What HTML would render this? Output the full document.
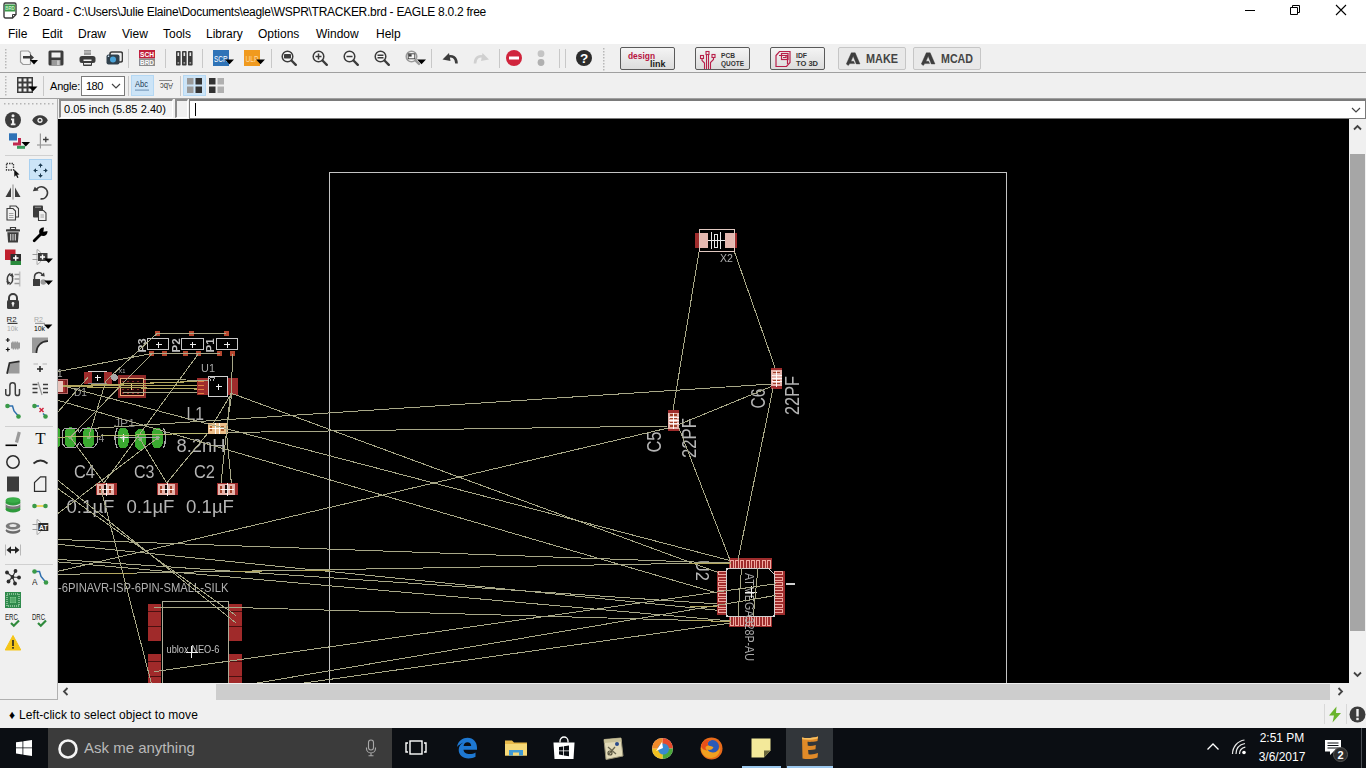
<!DOCTYPE html>
<html><head><meta charset="utf-8"><title>2 Board - EAGLE</title>
<style>
*{box-sizing:border-box;margin:0;padding:0}
html,body{width:1366px;height:768px;overflow:hidden;background:#f0f0f0;font-family:"Liberation Sans",sans-serif;font-size:12px;color:#000}
.abs{position:absolute}
#title{position:absolute;left:0;top:0;width:1366px;height:23px;background:#fff}
#title .t{position:absolute;left:23px;top:5px;font-size:12px;letter-spacing:-.28px;white-space:nowrap;color:#000}
#menu{position:absolute;left:0;top:23px;width:1366px;height:21px;background:#fff}
#menu span{position:absolute;top:4px;font-size:12px;white-space:nowrap}
#tb1{position:absolute;left:0;top:44px;width:1366px;height:29px;background:#f0f0f0;border-bottom:1px solid #a0a0a0}
#tb1>*{margin-top:1px}
#tb2{position:absolute;left:0;top:73px;width:1366px;height:26px;background:#f0f0f0;border-bottom:1px solid #a0a0a0}
#cmd{position:absolute;left:0;top:99px;width:1366px;height:20px;background:#f0f0f0}
#left{position:absolute;left:0;top:99px;width:58px;height:601px;background:#f0f0f0;border-right:1px solid #b0b0b0;border-bottom:1px solid #b0b0b0}
#canvas{position:absolute;left:58px;top:119px;width:1291px;height:564px;background:#000;overflow:hidden}
#vscroll{position:absolute;left:1349px;top:119px;width:17px;height:564px;background:#f0f0f0}
#hscroll{position:absolute;left:58px;top:683px;width:1291px;height:17px;background:#f0f0f0}
#status{position:absolute;left:0;top:700px;width:1366px;height:28px;background:#f0f0f0}
#task{position:absolute;left:0;top:728px;width:1366px;height:40px;background:#0b0e13}
.sep{position:absolute;width:1px;background:#c8c8c8}
</style></head><body>
<div id="title"><span class="t">2 Board - C:\Users\Julie Elaine\Documents\eagle\WSPR\TRACKER.brd - EAGLE 8.0.2 free</span><svg class="abs" style="left:3px;top:2px" width="14" height="17" viewBox="0 0 14 17"><path d="M2.500 1h9a1.500 1.500 0 0 1 1.500 1.500V12.500L9.500 16H2.500A1.500 1.500 0 0 1 1 14.500V2.500A1.500 1.500 0 0 1 2.500 1z" fill="#fff" stroke="#3a3a3a" stroke-width="1.400"/><path d="M9.500 16v-3.500H13" fill="none" stroke="#3a3a3a" stroke-width="1"/><rect x="1.700" y="2.500" width="10.600" height="7" fill="#3a9a48"/><text x="7" y="8.300" font-family="Liberation Sans,sans-serif" font-weight="700" font-size="5.500" fill="#c8f0c8" text-anchor="middle" textLength="9.500" lengthAdjust="spacingAndGlyphs">BRD</text></svg>
<svg class="abs" style="left:1244px;top:5px" width="12" height="12"><path d="M1 5.500h10" stroke="#000" stroke-width="1"/></svg>
<svg class="abs" style="left:1289px;top:4px" width="12" height="12"><path d="M1.500 3.500h7v7h-7z" fill="none" stroke="#000" stroke-width="1"/><path d="M3.500 3.500v-2h7v7h-2" fill="none" stroke="#000" stroke-width="1"/></svg>
<svg class="abs" style="left:1335px;top:4px" width="12" height="12"><path d="M1 1l10 10M11 1L1 11" stroke="#000" stroke-width="1.100"/></svg>
</div>
<div id="menu">
<span style="left:8px">File</span><span style="left:42px">Edit</span><span style="left:78px">Draw</span><span style="left:122px">View</span><span style="left:163px">Tools</span><span style="left:206px">Library</span><span style="left:258px">Options</span><span style="left:316px">Window</span><span style="left:376px">Help</span>
</div>
<div id="tb1">
<!-- handle dots -->
<svg class="abs" style="left:4px;top:3px" width="4" height="22"><g fill="#b8b8b8"><rect x="1" y="1" width="1.5" height="1.5"/><rect x="1" y="4" width="1.5" height="1.5"/><rect x="1" y="7" width="1.5" height="1.5"/><rect x="1" y="10" width="1.5" height="1.5"/><rect x="1" y="13" width="1.5" height="1.5"/><rect x="1" y="16" width="1.5" height="1.5"/><rect x="1" y="19" width="1.5" height="1.5"/></g></svg>
<!-- open -->
<svg class="abs" style="left:19px;top:5px" width="20" height="16" viewBox="0 0 20 16"><path d="M2.5 1h7l2 2v10.5a1 1 0 0 1-1 1H4l-2.500-2.500V2a1 1 0 0 1 1-1z" fill="#f4f4f4" stroke="#9a9a9a" stroke-width="1.2"/><path d="M4 6h7V4l4 3.500-4 3.500V8.500H4z" fill="#3c3c3c"/><path d="M11 10h8l-4 4.500z" fill="#000"/></svg>
<!-- save -->
<svg class="abs" style="left:48px;top:5px" width="16" height="16" viewBox="0 0 16 16"><path d="M2 0.500h12a1.500 1.500 0 0 1 1.500 1.500v12a1.500 1.500 0 0 1-1.500 1.500H2A1.500 1.500 0 0 1 .5 14V2A1.500 1.500 0 0 1 2 .5z" fill="#3c3c3c"/><rect x="3.500" y="2.500" width="9" height="5" fill="#f0f0f0"/><rect x="3.500" y="10" width="9" height="5.500" fill="#9a9a9a"/><rect x="9" y="10.500" width="2.500" height="4.500" fill="#c8c8c8"/></svg>
<!-- print -->
<svg class="abs" style="left:79px;top:5px" width="17" height="16" viewBox="0 0 17 16"><rect x="5" y="0" width="7" height="5" fill="#9a9a9a"/><rect x="5" y="1.500" width="7" height="1" fill="#d0d0d0"/><rect x="0.500" y="6" width="16" height="7" rx="2.500" fill="#3c3c3c"/><rect x="4" y="10" width="9" height="6" rx="1" fill="#3c3c3c"/><rect x="4.500" y="9.500" width="8" height="1.500" fill="#f0f0f0"/><rect x="5" y="13" width="7" height="1.500" fill="#f0f0f0"/></svg>
<!-- cam -->
<svg class="abs" style="left:106px;top:5px" width="17" height="16" viewBox="0 0 17 16"><rect x="4" y="2" width="12.500" height="10" rx="2" fill="none" stroke="#3c3c3c" stroke-width="1.600"/><rect x="0.500" y="4.500" width="13" height="10" rx="2" fill="#30404c"/><circle cx="7" cy="9.500" r="3" fill="#4aa3d8"/><circle cx="2.500" cy="6.300" r=".8" fill="#dfefff"/></svg>
<div class="sep" style="left:128px;top:4px;height:19px"></div>
<!-- SCH BRD -->
<svg class="abs" style="left:139px;top:5px" width="16" height="16" viewBox="0 0 16 16"><rect width="16" height="8.500" fill="#c0203a"/><rect y="8.500" width="16" height="7.500" fill="#8c8c8c"/><text x="8" y="7.200" font-family="Liberation Sans,sans-serif" font-weight="700" font-size="7.400" fill="#fff" text-anchor="middle" textLength="14" lengthAdjust="spacingAndGlyphs">SCH</text><text x="8" y="15" font-family="Liberation Sans,sans-serif" font-weight="700" font-size="7.400" fill="#fff" text-anchor="middle" textLength="14" lengthAdjust="spacingAndGlyphs">BRD</text></svg>
<div class="sep" style="left:165px;top:4px;height:19px"></div>
<!-- library -->
<svg class="abs" style="left:176px;top:6px" width="17" height="15" viewBox="0 0 17 15"><g fill="#3c3c3c"><rect x="0" y="0" width="4.600" height="14.500" rx=".8"/><rect x="6" y="0" width="4.600" height="14.500" rx=".8"/><rect x="12" y="0" width="4.600" height="14.500" rx=".8"/></g><g fill="#e8e8e8"><rect x="1.500" y="1.500" width="1.600" height="3.500"/><rect x="7.500" y="1.500" width="1.600" height="3.500"/><rect x="13.500" y="1.500" width="1.600" height="3.500"/></g><g fill="#9a9a9a"><rect x="1.500" y="11" width="1.600" height="1.800"/><rect x="7.500" y="11" width="1.600" height="1.800"/><rect x="13.500" y="11" width="1.600" height="1.800"/></g></svg>
<div class="sep" style="left:202px;top:4px;height:19px"></div>
<!-- SCR -->
<svg class="abs" style="left:213px;top:5px" width="22" height="16" viewBox="0 0 22 16"><rect width="16" height="16" fill="#2f73b7"/><text x="1" y="11.500" font-family="Liberation Sans,sans-serif" font-size="8.500" fill="#fff" textLength="13.500" lengthAdjust="spacingAndGlyphs">SCR</text><path d="M12 9.500h9l-4.500 4.700z" fill="#000"/></svg>
<!-- ULP -->
<svg class="abs" style="left:244px;top:5px" width="22" height="16" viewBox="0 0 22 16"><rect width="16" height="16" fill="#f09a1e"/><text x="1.500" y="11.500" font-family="Liberation Sans,sans-serif" font-size="8.500" fill="#ffd9a0" textLength="13" lengthAdjust="spacingAndGlyphs">ULP</text><path d="M12 9.500h9l-4.500 4.700z" fill="#000"/></svg>
<div class="sep" style="left:271px;top:4px;height:19px"></div>
<svg class="abs" style="left:281px;top:5px" width="17" height="17" viewBox="0 0 17 17"><circle cx="6.500" cy="6.500" r="5.300" fill="#f6f6f6" stroke="#3c3c3c" stroke-width="1.500"/><path d="M10.500 10.500l4.300 4.300" stroke="#3c3c3c" stroke-width="2.400" stroke-linecap="round"/><rect x="3" y="4" width="7" height="4.500" rx=".8" fill="#3c3c3c"/></svg>
<svg class="abs" style="left:312px;top:5px" width="17" height="17" viewBox="0 0 17 17"><circle cx="6.500" cy="6.500" r="5.300" fill="#f6f6f6" stroke="#3c3c3c" stroke-width="1.500"/><path d="M10.500 10.500l4.300 4.300" stroke="#3c3c3c" stroke-width="2.400" stroke-linecap="round"/><path d="M3.500 6.500h6M6.500 3.500v6" stroke="#3c3c3c" stroke-width="1.500"/></svg>
<svg class="abs" style="left:343px;top:5px" width="17" height="17" viewBox="0 0 17 17"><circle cx="6.500" cy="6.500" r="5.300" fill="#f6f6f6" stroke="#3c3c3c" stroke-width="1.500"/><path d="M10.500 10.500l4.300 4.300" stroke="#3c3c3c" stroke-width="2.400" stroke-linecap="round"/><path d="M3.500 6.500h6" stroke="#3c3c3c" stroke-width="1.500"/></svg>
<svg class="abs" style="left:374px;top:5px" width="17" height="17" viewBox="0 0 17 17"><circle cx="6.500" cy="6.500" r="5.300" fill="#f6f6f6" stroke="#3c3c3c" stroke-width="1.500"/><path d="M10.500 10.500l4.300 4.300" stroke="#3c3c3c" stroke-width="2.400" stroke-linecap="round"/><path d="M3.500 5.200h6M3.500 7.800h6" stroke="#3c3c3c" stroke-width="1.400"/></svg>
<svg class="abs" style="left:405px;top:5px" width="22" height="17" viewBox="0 0 22 17"><circle cx="6.500" cy="6.500" r="5.300" fill="#f6f6f6" stroke="#9a9a9a" stroke-width="1.500"/><path d="M10.500 10.500l3.500 3.500" stroke="#9a9a9a" stroke-width="2.400" stroke-linecap="round"/><rect x="3.200" y="3.800" width="6.600" height="5" fill="none" stroke="#3c3c3c" stroke-width=".9"/><rect x="3.600" y="4.200" width="3" height="2.400" fill="#3c3c3c"/><path d="M12 9.500h9l-4.500 4.700z" fill="#000"/></svg>
<div class="sep" style="left:431px;top:4px;height:19px"></div>
<svg class="abs" style="left:442px;top:5px" width="17" height="17" viewBox="0 0 17 17"><path d="M14.500 13.500C14.500 7 10 5.200 5.500 6.800" fill="none" stroke="#3c3c3c" stroke-width="2.600"/><path d="M0.500 9.500L7 3l1.500 8z" fill="#3c3c3c"/></svg>
<svg class="abs" style="left:473px;top:5px" width="17" height="17" viewBox="0 0 17 17"><path d="M2 13.500C2 7 6.500 5.200 11 6.800" fill="none" stroke="#d0d0d0" stroke-width="2.600"/><path d="M16 9.500L9.500 3 8 11z" fill="#d0d0d0"/></svg>
<div class="sep" style="left:499px;top:4px;height:19px"></div>
<svg class="abs" style="left:506px;top:5px" width="16" height="16" viewBox="0 0 16 16"><circle cx="8" cy="8" r="8" fill="#d0243c"/><rect x="3" y="6.500" width="10" height="3" fill="#fff"/></svg>
<svg class="abs" style="left:537px;top:5px" width="8" height="17" viewBox="0 0 8 17"><circle cx="4" cy="3.700" r="3.400" fill="#c4c4c4"/><circle cx="4" cy="12.500" r="3.400" fill="#b0b0b0"/></svg>
<div class="sep" style="left:559px;top:4px;height:19px"></div>
<div class="sep" style="left:565px;top:4px;height:19px"></div>
<svg class="abs" style="left:576px;top:5px" width="16" height="16" viewBox="0 0 16 16"><circle cx="8" cy="8" r="8" fill="#2c2c2c"/><text x="8" y="13" font-family="Liberation Sans,sans-serif" font-weight="700" font-size="13.500" fill="#fff" text-anchor="middle">?</text></svg>
<svg class="abs" style="left:603px;top:3px" width="3" height="23"><g fill="#b8b8b8"><rect x="0" y="0" width="1.500" height="1.500"/><rect x="0" y="3" width="1.500" height="1.500"/><rect x="0" y="6" width="1.500" height="1.500"/><rect x="0" y="9" width="1.500" height="1.500"/><rect x="0" y="12" width="1.500" height="1.500"/><rect x="0" y="15" width="1.500" height="1.500"/><rect x="0" y="18" width="1.500" height="1.500"/><rect x="0" y="21" width="1.500" height="1.500"/></g></svg>
<div class="abs" style="left:620px;top:2px;width:55px;height:23px;background:linear-gradient(#f4f4f4,#dcdcdc);border:1px solid #5a5a5a;border-radius:2px"><svg class="abs" style="left:0;top:0" width="54" height="21" viewBox="0 0 54 21"><text x="7" y="10.500" font-family="Liberation Sans,sans-serif" font-size="9.500" font-weight="700" fill="#b8143e" textLength="27" lengthAdjust="spacingAndGlyphs">design</text><text x="29" y="18.500" font-family="Liberation Sans,sans-serif" font-size="9.500" font-weight="700" fill="#1a1a1a" textLength="15.500" lengthAdjust="spacingAndGlyphs">link</text></svg></div>
<div class="abs" style="left:695px;top:2px;width:55px;height:23px;background:linear-gradient(#f4f4f4,#dcdcdc);border:1px solid #5a5a5a;border-radius:2px"><svg class="abs" style="left:0;top:0" width="54" height="21" viewBox="0 0 54 21"><g fill="none" stroke="#b8204a" stroke-width="1.100"><path d="M8.500 21v-6l-2.500-2.500v-2M10.500 21v-14.500M12.500 21v-14.500M14.500 21v-6.500l3-3v-2"/><rect x="4.500" y="7.500" width="3" height="3"/><rect x="10" y="3.500" width="3" height="3"/><rect x="16" y="6.500" width="3" height="3"/></g><text x="25" y="10" font-family="Liberation Sans,sans-serif" font-weight="700" font-size="6.800" fill="#333" textLength="14" lengthAdjust="spacingAndGlyphs">PCB</text><text x="25" y="17.500" font-family="Liberation Sans,sans-serif" font-weight="700" font-size="6.800" fill="#333" textLength="23" lengthAdjust="spacingAndGlyphs">QUOTE</text></svg></div>
<div class="abs" style="left:770px;top:2px;width:55px;height:23px;background:linear-gradient(#f4f4f4,#dcdcdc);border:1px solid #5a5a5a;border-radius:2px"><svg class="abs" style="left:0;top:0" width="54" height="21" viewBox="0 0 54 21"><g fill="none" stroke="#b8204a" stroke-width="1.200"><path d="M5 7.500l3.500-4h10.500v11l-3.500 4H5z"/><path d="M8 7.500h8.500v8.500"/><rect x="10.500" y="5.500" width="6.500" height="6"/><path d="M12 9.500h3v-2.500M12 7.500h1.500"/></g><text x="25" y="10" font-family="Liberation Sans,sans-serif" font-weight="700" font-size="6.800" fill="#333" textLength="11" lengthAdjust="spacingAndGlyphs">IDF</text><text x="25" y="17.500" font-family="Liberation Sans,sans-serif" font-weight="700" font-size="6.800" fill="#333" textLength="22" lengthAdjust="spacingAndGlyphs">TO 3D</text></svg></div>
<div class="abs" style="left:838px;top:2px;width:68px;height:23px;background:#e9e9e9;border:1px solid #c6c6c6;border-radius:2px"><svg class="abs" style="left:0;top:0" width="66" height="21" viewBox="0 0 66 21"><g transform="translate(7,4)"><path d="M0.300 12L5.300 0.800h3.900L14 12h-3.700L7.200 4.300 5 9.300h2.600l1.100 2.300H3.800L2.300 13.500z" fill="#3e3e3e" stroke="#3e3e3e" stroke-width=".4"/></g><text x="27" y="15" font-family="Liberation Sans,sans-serif" font-weight="700" font-size="12" fill="#444" textLength="32" lengthAdjust="spacingAndGlyphs">MAKE</text></svg></div>
<div class="abs" style="left:913px;top:2px;width:68px;height:23px;background:#e9e9e9;border:1px solid #c6c6c6;border-radius:2px"><svg class="abs" style="left:0;top:0" width="66" height="21" viewBox="0 0 66 21"><g transform="translate(7,4)"><path d="M0.300 12L5.300 0.800h3.900L14 12h-3.700L7.200 4.300 5 9.300h2.600l1.100 2.300H3.800L2.300 13.500z" fill="#3e3e3e" stroke="#3e3e3e" stroke-width=".4"/></g><text x="27" y="15" font-family="Liberation Sans,sans-serif" font-weight="700" font-size="12" fill="#444" textLength="32" lengthAdjust="spacingAndGlyphs">MCAD</text></svg></div>
</div>
<div id="tb2">
<svg class="abs" style="left:4px;top:2px" width="4" height="22"><g fill="#b8b8b8"><rect x="1" y="1" width="1.500" height="1.500"/><rect x="1" y="4" width="1.500" height="1.500"/><rect x="1" y="7" width="1.500" height="1.500"/><rect x="1" y="10" width="1.500" height="1.500"/><rect x="1" y="13" width="1.500" height="1.500"/><rect x="1" y="16" width="1.500" height="1.500"/><rect x="1" y="19" width="1.500" height="1.500"/></g></svg>
<svg class="abs" style="left:17px;top:4px" width="22" height="16" viewBox="0 0 22 16"><rect x="0" y="0" width="16" height="16" fill="#3c3c3c"/><g fill="#f0f0f0"><rect x="1.5" y="1.5" width="3" height="3"/><rect x="6.5" y="1.5" width="3" height="3"/><rect x="11.5" y="1.5" width="3" height="3"/><rect x="1.5" y="6.5" width="3" height="3"/><rect x="6.5" y="6.5" width="3" height="3"/><rect x="11.5" y="6.5" width="3" height="3"/><rect x="1.5" y="11.5" width="3" height="3"/><rect x="6.5" y="11.5" width="3" height="3"/><rect x="11.5" y="11.5" width="3" height="3"/></g><path d="M11.500 9.500h9l-4.500 4.700z" fill="#000"/></svg>
<div class="sep" style="left:43px;top:3px;height:20px"></div>
<span class="abs" id="angle" style="left:50px;top:7px;font-size:11px;letter-spacing:-.2px">Angle:</span>
<div class="abs" style="left:81px;top:3px;width:44px;height:20px;background:#fff;border:1px solid #7a7a7a"><span class="abs" id="v180" style="left:4px;top:3px;font-size:11px;letter-spacing:-.5px">180</span><svg class="abs" style="left:29px;top:6px" width="10" height="7"><path d="M1 1l4 4 4-4" fill="none" stroke="#444" stroke-width="1.200"/></svg></div>
<div class="sep" style="left:128px;top:3px;height:20px"></div>
<div class="abs" style="left:131px;top:2px;width:23px;height:21px;background:#cce4f7;border:1px solid #b4d8f4"></div>
<svg class="abs" style="left:134px;top:6px" width="17" height="14" viewBox="0 0 17 14"><text x="1" y="8" font-family="Liberation Sans,sans-serif" font-size="8.500" fill="#1e3a54" textLength="13" lengthAdjust="spacingAndGlyphs">Abc</text><rect x="1" y="10.500" width="14" height="1.200" fill="#7a9cbc"/></svg>
<svg class="abs" style="left:158px;top:6px" width="17" height="14" viewBox="0 0 17 14"><rect x="1" y="1" width="13" height="1" fill="#8a8a8a"/><g transform="translate(15,3.500) scale(-1,-1)"><text x="0" y="0" font-family="Liberation Sans,sans-serif" font-size="8.500" fill="#3c3c3c" textLength="13" lengthAdjust="spacingAndGlyphs">Abc</text></g></svg>
<div class="sep" style="left:180px;top:3px;height:20px"></div>
<div class="abs" style="left:183px;top:2px;width:23px;height:21px;background:#cce4f7;border:1px solid #b4d8f4"></div>
<svg class="abs" style="left:187px;top:5px" width="16" height="16" viewBox="0 0 16 16"><rect x="0" y="0" width="6.500" height="6.500" fill="#9a9a9a"/><rect x="8.500" y="0" width="6.500" height="6.500" fill="#333"/><rect x="0" y="8.500" width="6.500" height="6.500" fill="#9a9a9a"/><rect x="8.500" y="8.500" width="6.500" height="6.500" fill="#333"/></svg>
<svg class="abs" style="left:209px;top:5px" width="16" height="16" viewBox="0 0 16 16"><rect x="0" y="0" width="6.500" height="6.500" fill="#333"/><rect x="8.500" y="0" width="6.500" height="6.500" fill="#b0b0b0"/><rect x="0" y="8.500" width="6.500" height="6.500" fill="#333"/><rect x="8.500" y="8.500" width="6.500" height="6.500" fill="#b0b0b0"/></svg>
</div>
<div id="cmd">
<div class="abs" style="left:59px;top:0;width:114px;height:19px;background:#f4f4f4;border-top:2px solid #8c8c8c;border-left:2px solid #8c8c8c;border-right:1px solid #fff;border-bottom:1px solid #fff"><span class="abs" id="coord" style="left:3px;top:2px;font-size:11px;letter-spacing:.05px;white-space:nowrap">0.05 inch (5.85 2.40)</span></div>
<div class="abs" style="left:175px;top:0;width:13px;height:19px;background:#f0f0f0;border-top:2px solid #8c8c8c;border-left:2px solid #8c8c8c;border-right:1px solid #fff;border-bottom:1px solid #fff"></div>
<div class="abs" style="left:189px;top:0;width:1177px;height:20px;background:#fff;border:1px solid #7a7a7a;border-top:2px solid #7a7a7a"><div class="abs" style="left:5px;top:2px;width:1px;height:13px;background:#000"></div><svg class="abs" style="left:1161px;top:6px" width="10" height="7"><path d="M1 1l4 4 4-4" fill="none" stroke="#444" stroke-width="1.200"/></svg></div>
</div>
<div id="left">
<svg class="abs" style="left:4px;top:4px" width="50" height="2"><g fill="#b4b4b4"><rect x="0" y="0" width="1.500" height="1.500"/><rect x="4" y="0" width="1.500" height="1.500"/><rect x="8" y="0" width="1.500" height="1.500"/><rect x="12" y="0" width="1.500" height="1.500"/><rect x="16" y="0" width="1.500" height="1.500"/><rect x="20" y="0" width="1.500" height="1.500"/><rect x="24" y="0" width="1.500" height="1.500"/><rect x="28" y="0" width="1.500" height="1.500"/><rect x="32" y="0" width="1.500" height="1.500"/><rect x="36" y="0" width="1.500" height="1.500"/><rect x="40" y="0" width="1.500" height="1.500"/><rect x="44" y="0" width="1.500" height="1.500"/><rect x="48" y="0" width="1.500" height="1.500"/></g></svg>
<svg class="abs" style="left:5px;top:13px" width="16" height="16" viewBox="0 0 16 16"><circle cx="8" cy="8" r="8" fill="#3c3c3c"/><circle cx="8" cy="3.800" r="1.500" fill="#f0f0f0"/><path d="M6 6.500h3.200v5h1.300v1.700H5.800v-1.700h1.200v-3.300H6z" fill="#f0f0f0"/></svg>
<svg class="abs" style="left:32px;top:13px" width="16" height="16" viewBox="0 0 16 16"><path d="M0.200 8.300C3 1.500 13 1.500 15.800 8.300 13 15.100 3 15.100 .2 8.300z" fill="#3c3c3c"/><circle cx="8" cy="8.300" r="2.600" fill="#f0f0f0"/><circle cx="8" cy="8.300" r="1.200" fill="#3c3c3c"/></svg>
<svg class="abs" style="left:5px;top:34px" width="26" height="17" viewBox="0 0 26 17"><path d="M8 5h8v7.500H8z" fill="#c0284e"/><path d="M8 5h5v4.500H8z" fill="#f0f0f0"/><rect x="4" y="0.300" width="8" height="7.200" fill="#2f73b7"/><rect x="12" y="12.800" width="8" height="3" fill="#3a9a5c"/><path d="M16.5 9h8.600l-4.300 4.600z" fill="#000"/></svg>
<svg class="abs" style="left:32px;top:34px" width="20" height="17" viewBox="0 0 20 17"><path d="M8.400 0.500v15" stroke="#9a9a9a" stroke-width="1.200"/><path d="M5 12h14.500" stroke="#9a9a9a" stroke-width="1.200"/><path d="M11 6.500h5.600M13.800 3.700v5.600" stroke="#3c3c3c" stroke-width="1.300"/></svg>
<div class="abs" style="left:5px;top:56px;width:48px;height:1px;background:#d0d0d0"></div>
<svg class="abs" style="left:5px;top:63px" width="16" height="17" viewBox="0 0 16 17"><rect x="1.500" y="1.500" width="7" height="6.500" fill="none" stroke="#3c3c3c" stroke-width="1.300" stroke-dasharray="1.500 1"/><path d="M9.200 7.500l5.300 5-2.300.2 1.300 2.800-1.200.6-1.300-2.800-1.700 1.500z" fill="#111"/></svg>
<div class="abs" style="left:29px;top:60px;width:23px;height:21px;background:#cce4f7;border:1px solid #a8d0f0"></div>
<svg class="abs" style="left:32px;top:63px" width="17" height="17" viewBox="0 0 17 17"><g fill="#1c3a50"><path d="M8.500 1.300l2.300 2.700H6.200z"/><path d="M8.500 15.700l2.300-2.700H6.200z"/><path d="M1.300 8.500l2.700-2.300v4.600z"/><path d="M15.700 8.500l-2.700-2.300v4.600z"/><rect x="8" y="3.500" width="1" height="2"/><rect x="8" y="11.500" width="1" height="2"/><rect x="3.500" y="8" width="2" height="1"/><rect x="11.500" y="8" width="2" height="1"/></g></svg>
<svg class="abs" style="left:5px;top:85px" width="16" height="16" viewBox="0 0 16 16"><path d="M8 0.500v15" stroke="#9a9a9a" stroke-width="1.200"/><path d="M6 3.500v9.500H0.500z" fill="#3c3c3c"/><path d="M10 3.500v9.500h5.500z" fill="#3c3c3c"/></svg>
<svg class="abs" style="left:32px;top:85px" width="17" height="16" viewBox="0 0 17 16"><path d="M4.500 5.500A6 6 0 1 1 8.500 14.800" fill="none" stroke="#3c3c3c" stroke-width="1.700"/><path d="M0.800 7.300l5.800-.8-3.800-3.700z" fill="#3c3c3c"/></svg>
<svg class="abs" style="left:5px;top:106px" width="16" height="17" viewBox="0 0 16 17"><path d="M5 1h6l2.500 2.500v8.500H5z" fill="#f0f0f0" stroke="#3c3c3c" stroke-width="1.100"/><path d="M2 3.500h6l2.500 2.500v9H2z" fill="#f0f0f0" stroke="#3c3c3c" stroke-width="1.100"/><path d="M4 8.500h4.500M4 10.500h4.500M4 12.500h4.500" stroke="#9a9a9a" stroke-width=".9"/></svg>
<svg class="abs" style="left:32px;top:106px" width="16" height="17" viewBox="0 0 16 17"><rect x="1" y="0.500" width="10" height="12" rx="1" fill="#3c3c3c"/><rect x="3" y="1.700" width="6" height="1.200" fill="#888"/><path d="M6.500 5.500h5l2.500 2.500v7.500H6.500z" fill="#f0f0f0" stroke="#3c3c3c" stroke-width="1.100"/><path d="M8.500 10h3.500M8.500 12h3.500" stroke="#9a9a9a" stroke-width=".9"/></svg>
<svg class="abs" style="left:5px;top:128px" width="16" height="17" viewBox="0 0 16 17"><path d="M5.500 0.500h5v2h-5z" fill="none" stroke="#3c3c3c" stroke-width="1.200"/><rect x="1" y="2.300" width="14" height="2.200" rx=".6" fill="#3c3c3c"/><path d="M2.300 5.200h11.400l-.8 10.300H3.100z" fill="#3c3c3c"/><path d="M5.700 7v6.500M8 7v6.500M10.300 7v6.500" stroke="#d8d8d8" stroke-width="1.100"/></svg>
<svg class="abs" style="left:32px;top:128px" width="16" height="17" viewBox="0 0 16 17"><path d="M2.200 13.800L9.500 6.500" stroke="#000" stroke-width="2.800" stroke-linecap="round"/><circle cx="11.300" cy="4.700" r="4.200" fill="#000"/><path d="M11.300 4.700L12.300 -1 17 4z" fill="#f0f0f0"/></svg>
<svg class="abs" style="left:5px;top:150px" width="16" height="17" viewBox="0 0 16 17"><rect x="0" y="0.500" width="10.500" height="10.500" fill="#c0202e"/><rect x="5.500" y="5" width="10.500" height="7" fill="#2c2c2c"/><rect x="5.500" y="12" width="10.500" height="4" fill="#2a8a3c"/><path d="M8 9h5.500M10.700 6.200v5.600" stroke="#fff" stroke-width="1.500"/></svg>
<svg class="abs" style="left:32px;top:150px" width="22" height="17" viewBox="0 0 22 17"><path d="M5 0.500C11 2 11 14 5 15.500z" fill="#f4f4f4" stroke="#9a9a9a" stroke-width=".8"/><path d="M0.500 5.500h5M0.500 10.500h5" stroke="#9a9a9a" stroke-width="1.200"/><rect x="6" y="4" width="9.500" height="8" fill="#3c3c3c"/><path d="M8 8h5M10.500 5.500v5" stroke="#fff" stroke-width="1.400"/><path d="M12.3 9.5h8.600l-4.300 4.600z" fill="#000"/></svg>
<svg class="abs" style="left:5px;top:172px" width="16" height="17" viewBox="0 0 16 17"><path d="M5.500 2.500A5.500 6 0 0 0 3 11" fill="none" stroke="#3c3c3c" stroke-width="1.500"/><path d="M1.200 10l1.500 4 3-2.800z" fill="#3c3c3c"/><path d="M4.500 13.500A5.500 6 0 0 0 7 5" fill="none" stroke="#3c3c3c" stroke-width="1.500"/><path d="M8.800 6L7.300 2 4.300 4.800z" fill="#3c3c3c"/><path d="M14.700 0.500v15" stroke="#c4c4c4" stroke-width="1.600"/><path d="M9.500 3.500h5M9.500 8h5M9.500 12.500h5" stroke="#9a9a9a" stroke-width="1.300"/></svg>
<svg class="abs" style="left:32px;top:172px" width="22" height="17" viewBox="0 0 22 17"><path d="M2.500 8V5.500A4.200 4.200 0 0 1 10.500 4" fill="none" stroke="#3c3c3c" stroke-width="1.500"/><path d="M8.500 4.800l4.300.8-.8-4z" fill="#3c3c3c"/><rect x="1" y="8" width="7" height="7" fill="#3c3c3c"/><circle cx="11.300" cy="11" r="2.800" fill="#9a9a9a"/><path d="M12.3 9.5h8.600l-4.300 4.600z" fill="#000"/></svg>
<svg class="abs" style="left:5px;top:194px" width="16" height="17" viewBox="0 0 16 17"><path d="M4 7.500V5a4 4 0 0 1 8 0v2.500" fill="none" stroke="#3c3c3c" stroke-width="2"/><rect x="2" y="7" width="12" height="9" rx="1.500" fill="#3c3c3c"/><circle cx="8" cy="10.500" r="1.400" fill="#f0f0f0"/><rect x="7.300" y="10.500" width="1.400" height="3" fill="#f0f0f0"/></svg>
<svg class="abs" style="left:5px;top:216px" width="16" height="17" viewBox="0 0 16 17"><text x="1.500" y="6.500" font-family="Liberation Sans,sans-serif" font-size="7.800" fill="#222" textLength="10" lengthAdjust="spacingAndGlyphs">R2</text><rect x="2.500" y="7.800" width="10" height="1.200" fill="#3c3c3c"/><text x="2" y="16" font-family="Liberation Sans,sans-serif" font-size="7.800" fill="#a8a8a8" textLength="11" lengthAdjust="spacingAndGlyphs">10k</text></svg>
<svg class="abs" style="left:32px;top:216px" width="22" height="17" viewBox="0 0 22 17"><text x="2" y="6.500" font-family="Liberation Sans,sans-serif" font-size="7.800" fill="#a8a8a8" textLength="9" lengthAdjust="spacingAndGlyphs">R2</text><rect x="3" y="7.800" width="10" height="1.200" fill="#9a9a9a"/><text x="2" y="16" font-family="Liberation Sans,sans-serif" font-size="7.800" fill="#000" textLength="11" lengthAdjust="spacingAndGlyphs">10k</text><path d="M11.8 9.5h8.600l-4.300 4.600z" fill="#000"/></svg>
<svg class="abs" style="left:5px;top:238px" width="16" height="17" viewBox="0 0 16 17"><path d="M0.800 3h4M2.800 1v4M0.800 12.500h4M2.800 10.500v4" stroke="#111" stroke-width="1.200"/><path d="M6 5.500h1.200v-1h1.400v1h.8v-1h1.400v1h.8v-1h1.400v1H15v6h-1.500v1h-1.400v-1h-.8v1H9.900v-1h-.8v1H7.700v-1H6z" fill="#9a9a9a"/></svg>
<svg class="abs" style="left:32px;top:238px" width="16" height="17" viewBox="0 0 16 17"><rect x="0" y="0.500" width="16" height="15.500" fill="#9a9a9a"/><path d="M16 4.200A11 11 0 0 0 4.500 16H16z" fill="#f0f0f0"/><path d="M16 4.200A11 11 0 0 0 4.500 16" fill="none" stroke="#2c2c2c" stroke-width="1.700"/></svg>
<svg class="abs" style="left:5px;top:260px" width="16" height="17" viewBox="0 0 16 17"><path d="M4.500 4L14.500 2.500V14.500H2z" fill="#9a9a9a"/><path d="M2 14.800L4.500 4 14.500 2.300" fill="none" stroke="#2c2c2c" stroke-width="1.700"/></svg>
<svg class="abs" style="left:32px;top:261px" width="16" height="17" viewBox="0 0 16 17"><path d="M1.500 4h4.500M10.500 4h4.500" stroke="#b4b4b4" stroke-width="1.200"/><path d="M5 9h6M8 6v6" stroke="#222" stroke-width="1.500"/></svg>
<svg class="abs" style="left:5px;top:283px" width="16" height="17" viewBox="0 0 16 17"><path d="M0.700 7v4.500a2 2 0 0 0 4.200 0V3.500a2.700 2.700 0 0 1 5.400 0v8a2 2 0 0 0 4.200 0V7" fill="none" stroke="#3c3c3c" stroke-width="1.500"/></svg>
<svg class="abs" style="left:32px;top:282px" width="16" height="17" viewBox="0 0 16 17"><path d="M0.500 3.500h5M0.500 7.500h5M0.500 11.500h5M11 3.500h5M11 7.500h5M11 11.500h5" stroke="#3c3c3c" stroke-width="1.400"/><path d="M6 1l4 13" stroke="#9a9a9a" stroke-width="1.200"/></svg>
<svg class="abs" style="left:5px;top:304px" width="16" height="17" viewBox="0 0 16 17"><path d="M2.500 3h5l1.500 5 4.800 5.500" fill="none" stroke="#2f6fae" stroke-width="1.500"/><circle cx="2.500" cy="3" r="2.300" fill="#3a9a48"/><circle cx="13.500" cy="13.500" r="2.300" fill="#3a9a48"/></svg>
<svg class="abs" style="left:32px;top:304px" width="16" height="17" viewBox="0 0 16 17"><path d="M2.500 3h4.500M11 10.500l3 3" fill="none" stroke="#2f6fae" stroke-width="1.500"/><circle cx="2.500" cy="3" r="2.300" fill="#3a9a48"/><circle cx="13.500" cy="13.500" r="2.300" fill="#3a9a48"/><path d="M7.500 5l4 4M11.500 5l-4 4" stroke="#d0203a" stroke-width="1.400"/></svg>
<div class="abs" style="left:5px;top:327px;width:48px;height:1px;background:#d0d0d0"></div>
<svg class="abs" style="left:5px;top:332px" width="16" height="17" viewBox="0 0 16 17"><path d="M0.500 14.300h11.500" stroke="#000" stroke-width="1.600"/><path d="M11.500 11.500L14.300 1" stroke="#9a9a9a" stroke-width="3.200"/></svg>
<svg class="abs" style="left:32px;top:331px" width="17" height="17" viewBox="0 0 17 17"><text x="8.500" y="14" font-family="Liberation Serif,serif" font-size="17" fill="#111" text-anchor="middle">T</text></svg>
<svg class="abs" style="left:5px;top:355px" width="16" height="16" viewBox="0 0 16 16"><circle cx="8" cy="8" r="6.200" fill="none" stroke="#2c2c2c" stroke-width="1.500"/></svg>
<svg class="abs" style="left:32px;top:355px" width="17" height="16" viewBox="0 0 17 16"><path d="M1.500 9.500Q8.500 3.500 15.500 9.500" fill="none" stroke="#2c2c2c" stroke-width="1.700"/></svg>
<svg class="abs" style="left:5px;top:377px" width="16" height="16" viewBox="0 0 16 16"><rect x="2" y="0.500" width="12" height="15" fill="#3c3c3c"/></svg>
<svg class="abs" style="left:32px;top:377px" width="16" height="16" viewBox="0 0 16 16"><path d="M2.500 15.300V6.500L8.500 0.800h5.300V15.300z" fill="none" stroke="#2c2c2c" stroke-width="1.200"/></svg>
<svg class="abs" style="left:5px;top:398px" width="16" height="17" viewBox="0 0 16 17"><ellipse cx="8" cy="12.500" rx="7.300" ry="3" fill="#2f9a3c"/><rect x="0.700" y="10" width="14.600" height="2.500" fill="#2f9a3c"/><ellipse cx="8" cy="9.200" rx="7.300" ry="3" fill="#7a7a7a"/><rect x="0.700" y="6" width="14.600" height="3" fill="#7a7a7a"/><ellipse cx="8" cy="6.800" rx="7.300" ry="2.600" fill="#e8e8e8"/><ellipse cx="8" cy="5.400" rx="7.300" ry="3" fill="#2f9a3c"/><rect x="0.700" y="3" width="14.600" height="2.400" fill="#2f9a3c"/><ellipse cx="8" cy="3" rx="7.300" ry="2.800" fill="#3aae48"/></svg>
<svg class="abs" style="left:32px;top:399px" width="16" height="16" viewBox="0 0 16 16"><path d="M2.500 8h11" stroke="#e8d040" stroke-width="1.600"/><circle cx="2.500" cy="8" r="2.300" fill="#3a9a48"/><circle cx="13.500" cy="8" r="2.300" fill="#3a9a48"/></svg>
<svg class="abs" style="left:5px;top:420px" width="16" height="17" viewBox="0 0 16 17"><ellipse cx="8" cy="11.500" rx="7.300" ry="3.300" fill="#6a6a6a"/><ellipse cx="8" cy="9.300" rx="7.300" ry="2.900" fill="#e8e8e8"/><ellipse cx="8" cy="7" rx="7.300" ry="3.600" fill="#7a7a7a"/><ellipse cx="8" cy="6.500" rx="3.600" ry="1.500" fill="#e8e8e8"/></svg>
<svg class="abs" style="left:32px;top:420px" width="17" height="17" viewBox="0 0 17 17"><path d="M5 0.500C11 2 11 14 5 15.500z" fill="#f4f4f4" stroke="#9a9a9a" stroke-width=".8"/><path d="M0.500 5.500h5M0.500 10.500h5" stroke="#9a9a9a" stroke-width="1.200"/><rect x="6.300" y="4" width="10" height="8" fill="#2c2c2c"/><text x="11.300" y="11" font-family="Liberation Sans,sans-serif" font-weight="700" font-size="7.500" fill="#fff" text-anchor="middle" textLength="8.500" lengthAdjust="spacingAndGlyphs">AT</text></svg>
<svg class="abs" style="left:5px;top:443px" width="16" height="16" viewBox="0 0 16 16"><path d="M0.500 2.500v11M15.500 2.500v11" stroke="#b8b8b8" stroke-width="1"/><path d="M4 8h8" stroke="#222" stroke-width="1.800"/><path d="M1.500 8l4.500-3.800v7.600z" fill="#222"/><path d="M14.500 8L10 4.200v7.600z" fill="#222"/></svg>
<div class="abs" style="left:5px;top:465px;width:48px;height:1px;background:#d0d0d0"></div>
<svg class="abs" style="left:5px;top:470px" width="16" height="17" viewBox="0 0 16 17"><g stroke="#3c3c3c" stroke-width="1.200"><path d="M7.500 8L2 3.500M7.500 8L10.500 2M7.500 8L14 8.500M7.500 8L3.500 12.500M7.500 8L10 14.500"/></g><g fill="#2c2c2c"><circle cx="7.500" cy="8" r="1.900"/><circle cx="2" cy="3.500" r="1.900"/><circle cx="10.500" cy="2" r="1.900"/><circle cx="14" cy="8.500" r="1.900"/><circle cx="3.500" cy="12.500" r="1.900"/><circle cx="10" cy="14.500" r="1.900"/></g></svg>
<svg class="abs" style="left:32px;top:470px" width="17" height="17" viewBox="0 0 17 17"><path d="M2.500 2.500h5l1.500 5 5 6" fill="none" stroke="#2f6fae" stroke-width="1.500"/><circle cx="2.500" cy="2.500" r="2.300" fill="#3a9a48"/><circle cx="14" cy="13.500" r="2.300" fill="#3a9a48"/><text x="0" y="15.500" font-family="Liberation Sans,sans-serif" font-size="9" fill="#222" textLength="5.500" lengthAdjust="spacingAndGlyphs">A</text></svg>
<svg class="abs" style="left:5px;top:493px" width="16" height="16" viewBox="0 0 16 16"><rect x="0" y="0" width="16" height="16" fill="#2f8a4c"/><rect x="2" y="2" width="12" height="12" fill="none" stroke="#d8f0d8" stroke-width="1" stroke-dasharray="1 1"/><rect x="5" y="5" width="6" height="6" fill="#7ac88a"/><path d="M7 5v6M9 5v6M5 7h6M5 9h6" stroke="#2f8a4c" stroke-width=".6"/></svg>
<svg class="abs" style="left:5px;top:513px" width="17" height="18" viewBox="0 0 17 18"><text x="0" y="7.500" font-family="Liberation Sans,sans-serif" font-size="8.500" fill="#222" textLength="13" lengthAdjust="spacingAndGlyphs">ERC</text><path d="M6 11l2.800 2.700 5.200-5.200" fill="none" stroke="#2f8a3c" stroke-width="2.200"/></svg>
<svg class="abs" style="left:32px;top:513px" width="17" height="18" viewBox="0 0 17 18"><text x="0" y="7.500" font-family="Liberation Sans,sans-serif" font-size="8.500" fill="#222" textLength="13" lengthAdjust="spacingAndGlyphs">DRC</text><path d="M6 11l2.800 2.700 5.200-5.200" fill="none" stroke="#2f8a3c" stroke-width="2.200"/></svg>
<svg class="abs" style="left:5px;top:536px" width="16" height="17" viewBox="0 0 16 17"><path d="M8 0.500L15.800 15H0.200z" fill="#f5c518" stroke="#f5c518" stroke-width="1" stroke-linejoin="round"/><rect x="7.200" y="5" width="1.600" height="6" fill="#222"/><rect x="7.200" y="12" width="1.600" height="1.700" fill="#222"/></svg>
</div>
<div id="canvas">
<svg id="cv" class="abs" style="left:0;top:0;will-change:transform" width="1291" height="564" viewBox="58 119 1291 564" shape-rendering="crispEdges">
<path d="M329.5 700V172.500H1006.500V700" fill="none" stroke="#c4c4c4" stroke-width="1"/>
<rect x="695" y="233" width="13" height="15" fill="#9e2c2c"/>
<rect x="724.5" y="233" width="12.5" height="15" fill="#9e2c2c"/>
<rect x="699.5" y="233" width="8.5" height="15" fill="#e4b8b0"/>
<rect x="724.5" y="233" width="9.5" height="15" fill="#e4b8b0"/>
<rect x="699.5" y="229.5" width="35" height="22" fill="none" stroke="#e0c8c0" stroke-width="1"/>
<path d="M701 231.500h32M701 249.500h32" stroke="#000" stroke-width="2" stroke-dasharray="1.500 1.500"/>
<path d="M711.500 232v17M720.500 232v17M708 240.500h17" stroke="#e8e8e8" stroke-width="1" fill="none"/>
<rect x="714.5" y="234" width="3" height="13" fill="none" stroke="#e8e8e8" stroke-width="1"/>
<text x="720" y="262" font-family="Liberation Sans,sans-serif" font-size="11" fill="#b0b0b0" text-anchor="start" textLength="13" lengthAdjust="spacingAndGlyphs">X2</text>
<rect x="667.5" y="410" width="11.5" height="21" fill="#9e2c2c"/>
<rect x="668.0" y="412.5" width="10.5" height="16" fill="#e6b4ac"/>
<path d="M670.0 415h7M670.0 418h7M670.0 423h7M670.0 426h7" stroke="#a04028" stroke-width="1.300"/>
<path d="M668.5 420.5h10M673.5 413v16M668.5 417.5h10M668.5 423.5h10" stroke="#fff" stroke-width=".9" fill="none"/>
<rect x="770.5" y="367.5" width="11.5" height="21" fill="#9e2c2c"/>
<rect x="771.0" y="370.0" width="10.5" height="16" fill="#e6b4ac"/>
<path d="M773.0 372.5h7M773.0 375.5h7M773.0 380.5h7M773.0 383.5h7" stroke="#a04028" stroke-width="1.300"/>
<path d="M771.5 378.0h10M776.5 370.5v16M771.5 375.0h10M771.5 381.0h10" stroke="#fff" stroke-width=".9" fill="none"/>
<text x="661" y="452.5" font-family="Liberation Sans,sans-serif" font-size="19.5" fill="#b4b4b4" text-anchor="start" transform="rotate(-90 661 452.5)" textLength="21" lengthAdjust="spacingAndGlyphs">C5</text>
<text x="696" y="458" font-family="Liberation Sans,sans-serif" font-size="19.5" fill="#b4b4b4" text-anchor="start" transform="rotate(-90 696 458)" textLength="40" lengthAdjust="spacingAndGlyphs">22PF</text>
<text x="764.5" y="408.5" font-family="Liberation Sans,sans-serif" font-size="19.5" fill="#b4b4b4" text-anchor="start" transform="rotate(-90 764.5 408.5)" textLength="20" lengthAdjust="spacingAndGlyphs">C6</text>
<text x="799" y="415" font-family="Liberation Sans,sans-serif" font-size="19.5" fill="#b4b4b4" text-anchor="start" transform="rotate(-90 799 415)" textLength="39" lengthAdjust="spacingAndGlyphs">22PF</text>
<rect x="729" y="558" width="43" height="10.5" fill="#9e2c2c"/>
<rect x="729" y="616" width="43" height="11" fill="#9e2c2c"/>
<rect x="716.5" y="570.5" width="10" height="44" fill="#9e2c2c"/>
<rect x="774.5" y="570.5" width="10.5" height="44" fill="#9e2c2c"/>
<rect x="730.2" y="560" width="3" height="8" fill="none" stroke="#f0a8a0" stroke-width="1"/>
<rect x="730.2" y="616.5" width="3" height="8.5" fill="none" stroke="#f0a8a0" stroke-width="1"/>
<rect x="718.5" y="571.7" width="8" height="3" fill="none" stroke="#f0a8a0" stroke-width="1"/>
<rect x="774.5" y="571.7" width="8" height="3" fill="none" stroke="#f0a8a0" stroke-width="1"/>
<rect x="735.55" y="560" width="3" height="8" fill="none" stroke="#f0a8a0" stroke-width="1"/>
<rect x="735.55" y="616.5" width="3" height="8.5" fill="none" stroke="#f0a8a0" stroke-width="1"/>
<rect x="718.5" y="577.1" width="8" height="3" fill="none" stroke="#f0a8a0" stroke-width="1"/>
<rect x="774.5" y="577.1" width="8" height="3" fill="none" stroke="#f0a8a0" stroke-width="1"/>
<rect x="740.9" y="560" width="3" height="8" fill="none" stroke="#f0a8a0" stroke-width="1"/>
<rect x="740.9" y="616.5" width="3" height="8.5" fill="none" stroke="#f0a8a0" stroke-width="1"/>
<rect x="718.5" y="582.5" width="8" height="3" fill="none" stroke="#f0a8a0" stroke-width="1"/>
<rect x="774.5" y="582.5" width="8" height="3" fill="none" stroke="#f0a8a0" stroke-width="1"/>
<rect x="746.25" y="560" width="3" height="8" fill="none" stroke="#f0a8a0" stroke-width="1"/>
<rect x="746.25" y="616.5" width="3" height="8.5" fill="none" stroke="#f0a8a0" stroke-width="1"/>
<rect x="718.5" y="587.9" width="8" height="3" fill="none" stroke="#f0a8a0" stroke-width="1"/>
<rect x="774.5" y="587.9" width="8" height="3" fill="none" stroke="#f0a8a0" stroke-width="1"/>
<rect x="751.6" y="560" width="3" height="8" fill="none" stroke="#f0a8a0" stroke-width="1"/>
<rect x="751.6" y="616.5" width="3" height="8.5" fill="none" stroke="#f0a8a0" stroke-width="1"/>
<rect x="718.5" y="593.3" width="8" height="3" fill="none" stroke="#f0a8a0" stroke-width="1"/>
<rect x="774.5" y="593.3" width="8" height="3" fill="none" stroke="#f0a8a0" stroke-width="1"/>
<rect x="756.95" y="560" width="3" height="8" fill="none" stroke="#f0a8a0" stroke-width="1"/>
<rect x="756.95" y="616.5" width="3" height="8.5" fill="none" stroke="#f0a8a0" stroke-width="1"/>
<rect x="718.5" y="598.7" width="8" height="3" fill="none" stroke="#f0a8a0" stroke-width="1"/>
<rect x="774.5" y="598.7" width="8" height="3" fill="none" stroke="#f0a8a0" stroke-width="1"/>
<rect x="762.3" y="560" width="3" height="8" fill="none" stroke="#f0a8a0" stroke-width="1"/>
<rect x="762.3" y="616.5" width="3" height="8.5" fill="none" stroke="#f0a8a0" stroke-width="1"/>
<rect x="718.5" y="604.1" width="8" height="3" fill="none" stroke="#f0a8a0" stroke-width="1"/>
<rect x="774.5" y="604.1" width="8" height="3" fill="none" stroke="#f0a8a0" stroke-width="1"/>
<rect x="767.65" y="560" width="3" height="8" fill="none" stroke="#f0a8a0" stroke-width="1"/>
<rect x="767.65" y="616.5" width="3" height="8.5" fill="none" stroke="#f0a8a0" stroke-width="1"/>
<rect x="718.5" y="609.5" width="8" height="3" fill="none" stroke="#f0a8a0" stroke-width="1"/>
<rect x="774.5" y="609.5" width="8" height="3" fill="none" stroke="#f0a8a0" stroke-width="1"/>
<path d="M726.500 568.500H768.500L774.500 574.500V616.500H726.500z" fill="#000" stroke="#d0d0d0" stroke-width="1"/>
<path d="M726 568h2v2h-2zM726 615h2v2h-2zM773 615h2v2h-2z" fill="#d8d8d8"/>
<line x1="786" y1="584" x2="795" y2="584" stroke="#d0d0d0" stroke-width="1.2"/>
<text x="696" y="560" font-family="Liberation Sans,sans-serif" font-size="19" fill="#b8b8b8" text-anchor="start" transform="rotate(90 696 560)" textLength="21" lengthAdjust="spacingAndGlyphs">U2</text>
<text x="745" y="573" font-family="Liberation Sans,sans-serif" font-size="12.5" fill="#a8a8a8" text-anchor="start" transform="rotate(90 745 573)" textLength="88" lengthAdjust="spacingAndGlyphs">ATMEGA328P-AU</text>
<path d="M745 592h12M751 586v12" stroke="#f0f0f0" stroke-width="1" fill="none"/>
<rect x="148" y="604" width="13" height="37" fill="#a02a2a"/>
<rect x="228.5" y="604" width="13.5" height="37" fill="#a02a2a"/>
<rect x="148" y="654" width="13" height="30" fill="#a02a2a"/>
<rect x="228.5" y="654" width="13.5" height="30" fill="#a02a2a"/>
<line x1="148" y1="611.5" x2="161" y2="611.5" stroke="#4a1010" stroke-width="1"/>
<line x1="228.5" y1="611.5" x2="242" y2="611.5" stroke="#4a1010" stroke-width="1"/>
<line x1="148" y1="626.5" x2="161" y2="626.5" stroke="#4a1010" stroke-width="1"/>
<line x1="228.5" y1="626.5" x2="242" y2="626.5" stroke="#4a1010" stroke-width="1"/>
<line x1="148" y1="661.5" x2="161" y2="661.5" stroke="#4a1010" stroke-width="1"/>
<line x1="228.5" y1="661.5" x2="242" y2="661.5" stroke="#4a1010" stroke-width="1"/>
<line x1="148" y1="676.5" x2="161" y2="676.5" stroke="#4a1010" stroke-width="1"/>
<line x1="228.5" y1="676.5" x2="242" y2="676.5" stroke="#4a1010" stroke-width="1"/>
<path d="M162.500 700V601.500H228.500V700" fill="none" stroke="#acac98" stroke-width="1"/>
<text x="166.5" y="653" font-family="Liberation Sans,sans-serif" font-size="10.5" fill="#c0c0c0" text-anchor="start" textLength="53" lengthAdjust="spacingAndGlyphs">ublox NEO-6</text>
<path d="M185.5 652h12M191.5 646v12" stroke="#f0f0f0" stroke-width="1" fill="none"/>
<text x="58" y="592" font-family="Liberation Sans,sans-serif" font-size="12.2" fill="#b0b0b0" text-anchor="start" textLength="170.5" lengthAdjust="spacingAndGlyphs">-6PINAVR-ISP-6PIN-SMALL-SILK</text>
<rect x="95.5" y="483" width="21.5" height="12" fill="#9e2c2c"/>
<rect x="97.0" y="483.5" width="17" height="11" fill="#e6b4ac"/>
<path d="M100.0 486v2.500M100.0 490v2.500M110.0 486v2.500M110.0 490v2.500" stroke="#a04028" stroke-width="2.200"/>
<rect x="104.0" y="485" width="2.5" height="8" fill="#1a0808"/>
<path d="M99.5 489.5h13M106.5 483v13" stroke="#fff" stroke-width=".9" fill="none"/>
<rect x="156.5" y="483" width="21.5" height="12" fill="#9e2c2c"/>
<rect x="158.0" y="483.5" width="17" height="11" fill="#e6b4ac"/>
<path d="M161.0 486v2.500M161.0 490v2.500M171.0 486v2.500M171.0 490v2.500" stroke="#a04028" stroke-width="2.200"/>
<rect x="165.0" y="485" width="2.5" height="8" fill="#1a0808"/>
<path d="M160.5 489.5h13M167.5 483v13" stroke="#fff" stroke-width=".9" fill="none"/>
<rect x="216.5" y="483" width="21.5" height="12" fill="#9e2c2c"/>
<rect x="218.0" y="483.5" width="17" height="11" fill="#e6b4ac"/>
<path d="M221.0 486v2.500M221.0 490v2.500M231.0 486v2.500M231.0 490v2.500" stroke="#a04028" stroke-width="2.200"/>
<rect x="225.0" y="485" width="2.5" height="8" fill="#1a0808"/>
<path d="M220.5 489.5h13M227.5 483v13" stroke="#fff" stroke-width=".9" fill="none"/>
<text x="74" y="478" font-family="Liberation Sans,sans-serif" font-size="18.5" fill="#b4b4b4" text-anchor="start" textLength="21" lengthAdjust="spacingAndGlyphs">C4</text>
<text x="134" y="478" font-family="Liberation Sans,sans-serif" font-size="18.5" fill="#b4b4b4" text-anchor="start" textLength="20.5" lengthAdjust="spacingAndGlyphs">C3</text>
<text x="194" y="478" font-family="Liberation Sans,sans-serif" font-size="18.5" fill="#b4b4b4" text-anchor="start" textLength="21" lengthAdjust="spacingAndGlyphs">C2</text>
<text x="66.5" y="512.5" font-family="Liberation Sans,sans-serif" font-size="19" fill="#b4b4b4" text-anchor="start" textLength="48" lengthAdjust="spacingAndGlyphs">0.1µF</text>
<text x="126.5" y="512.5" font-family="Liberation Sans,sans-serif" font-size="19" fill="#b4b4b4" text-anchor="start" textLength="48" lengthAdjust="spacingAndGlyphs">0.1µF</text>
<text x="186" y="512.5" font-family="Liberation Sans,sans-serif" font-size="19" fill="#b4b4b4" text-anchor="start" textLength="48" lengthAdjust="spacingAndGlyphs">0.1µF</text>
<rect x="207.5" y="423" width="20" height="11" fill="#ecc08c"/>
<path d="M211 425.500v6M222.500 425.500v6" stroke="#b06030" stroke-width="2.400" stroke-dasharray="2.300 1.200"/>
<path d="M215.500 423v11M219 423v11M209 428.500h17" stroke="#fff" stroke-width=".9" fill="none"/>
<text x="186.5" y="420" font-family="Liberation Sans,sans-serif" font-size="18.5" fill="#b4b4b4" text-anchor="start" textLength="17.5" lengthAdjust="spacingAndGlyphs">L1</text>
<text x="176.5" y="452" font-family="Liberation Sans,sans-serif" font-size="17.5" fill="#b4b4b4" text-anchor="start" textLength="49" lengthAdjust="spacingAndGlyphs">8.2nH</text>
<rect x="52" y="427.500" width="8" height="20" rx="4" fill="#3aaa30"/>
<rect x="65.0" y="427.25" width="11" height="20.5" rx="5.5" fill="#3aaa30"/>
<circle cx="70.5" cy="437.5" r="2" fill="#80b880"/>
<rect x="83.1" y="427.25" width="11" height="20.5" rx="5.5" fill="#3aaa30"/>
<circle cx="88.6" cy="437.5" r="2" fill="#80b880"/>
<path d="M62 432l3-4h11l3.500 4.500 3.500-4.500h11l3.500 4.500v10l-3.500 4.500h-11l-3.500-4.500-3.500 4.500h-11l-3-4z" fill="none" stroke="#a8a8a8" stroke-width="1"/>
<text x="98.5" y="441.5" font-family="Liberation Sans,sans-serif" font-size="10.5" fill="#9a9a9a" text-anchor="start">4</text>
<rect x="118.0" y="427.5" width="10.5" height="21" rx="5.25" fill="#3aaa30"/>
<circle cx="123.25" cy="438" r="2" fill="#80b880"/>
<rect x="135.0" y="429.0" width="10.5" height="21" rx="5.25" fill="#3aaa30"/>
<circle cx="140.25" cy="439.5" r="2" fill="#80b880"/>
<rect x="152.15" y="427.5" width="10.5" height="21" rx="5.25" fill="#3aaa30"/>
<circle cx="157.4" cy="438" r="2" fill="#80b880"/>
<path d="M117 428q-4 10 0 20M163.500 428q4 10 0 20" fill="none" stroke="#a8a8a8" stroke-width="1.300"/>
<line x1="115" y1="437.5" x2="160" y2="437.5" stroke="#a8a8a8" stroke-width="1"/>
<path d="M119.5 437.5h8M123.5 433.5v8" stroke="#f0f0f0" stroke-width="1" fill="none"/>
<text x="114" y="426.5" font-family="Liberation Sans,sans-serif" font-size="11.5" fill="#8c8c8c" text-anchor="start" textLength="21" lengthAdjust="spacingAndGlyphs">JP1</text>
<rect x="58" y="379" width="10" height="15" fill="#7a2020"/>
<rect x="58" y="381" width="4.5" height="11" fill="#e8c4bc"/>
<rect x="62.5" y="381" width="2.5" height="11" fill="#a83030"/>
<rect x="57.5" y="379.5" width="10" height="14" fill="none" stroke="#b06868" stroke-width="1"/>
<text x="57" y="376.5" font-family="Liberation Sans,sans-serif" font-size="10" fill="#b0b0b0" text-anchor="start">1</text>
<rect x="84" y="372" width="7.5" height="11.5" fill="#9e2c2c"/>
<rect x="104" y="372" width="7.5" height="11.5" fill="#9e2c2c"/>
<line x1="88" y1="371.5" x2="107" y2="371.5" stroke="#d0d0d0" stroke-width="1"/>
<line x1="88" y1="383.5" x2="107" y2="383.5" stroke="#8a8a8a" stroke-width="1"/>
<path d="M94.5 377.5h6M97.5 374.5v6" stroke="#f0f0f0" stroke-width="1" fill="none"/>
<text x="74" y="395.5" font-family="Liberation Sans,sans-serif" font-size="10.5" fill="#a0a0a0" text-anchor="start" textLength="13" lengthAdjust="spacingAndGlyphs">D1</text>
<circle cx="114.500" cy="377.500" r="3.200" fill="#a8a8a8"/>
<text x="118.5" y="372.5" font-family="Liberation Sans,sans-serif" font-size="5.5" fill="#b0b0b0" text-anchor="start" textLength="7" lengthAdjust="spacingAndGlyphs">X1</text>
<rect x="117.5" y="375" width="28.5" height="23" fill="#8c2828"/>
<rect x="121" y="379" width="22" height="16" fill="#1a0606"/>
<path d="M122 381.500h20M122 385.500h20M122 389.500h20M122 393h20" stroke="#8c2828" stroke-width="1.200" stroke-dasharray="1.500 3.500"/>
<rect x="120.5" y="378.5" width="22.5" height="16.5" fill="none" stroke="#f0a878" stroke-width="1"/>
<line x1="125" y1="392.5" x2="140" y2="392.5" stroke="#f0a878" stroke-width="1"/>
<path d="M128.5 387h6M131.5 384v6" stroke="#f0d890" stroke-width="1" fill="none"/>
<rect x="197" y="378" width="11.5" height="17" fill="#9e2c2c"/>
<rect x="227" y="378" width="11" height="17" fill="#9e2c2c"/>
<path d="M198 381.500h6M198 385.500h6M198 389.500h6M198 393h6" stroke="#e08040" stroke-width="1" />
<rect x="208.5" y="376.5" width="18.5" height="20" fill="#000" stroke="#d0d0d0" stroke-width="1"/>
<path d="M209.500 377.500h5l-2.500 3.500z" fill="none" stroke="#c0c0c0" stroke-width=".9"/>
<path d="M215.5 386.5h6M218.5 383.5v6" stroke="#f0f0f0" stroke-width="1" fill="none"/>
<text x="201" y="371.8" font-family="Liberation Sans,sans-serif" font-size="10.5" fill="#a8a8a8" text-anchor="start" textLength="14" lengthAdjust="spacingAndGlyphs">U1</text>
<rect x="155.0" y="330.5" width="5" height="5" fill="#b84830"/>
<rect x="189.0" y="330.5" width="5" height="5" fill="#b84830"/>
<rect x="223.5" y="330.5" width="5" height="5" fill="#b84830"/>
<rect x="149.2" y="351" width="5" height="5" fill="#b84830"/>
<rect x="161.5" y="351" width="5" height="5" fill="#b84830"/>
<rect x="183.0" y="351" width="5" height="5" fill="#b84830"/>
<rect x="196.0" y="351" width="5" height="5" fill="#b84830"/>
<rect x="217.0" y="351" width="5" height="5" fill="#b84830"/>
<rect x="229.7" y="351" width="5" height="5" fill="#b84830"/>
<rect x="147.5" y="338.5" width="21" height="11" fill="#000" stroke="#c8c8c8" stroke-width="1"/>
<path d="M155.5 344.5h6M158.5 341.5v6" stroke="#f0f0f0" stroke-width="1" fill="none"/>
<rect x="181.5" y="338.5" width="22" height="11" fill="#000" stroke="#c8c8c8" stroke-width="1"/>
<path d="M189.5 344.5h6M192.5 341.5v6" stroke="#f0f0f0" stroke-width="1" fill="none"/>
<rect x="216.5" y="338.5" width="21" height="11" fill="#000" stroke="#c8c8c8" stroke-width="1"/>
<path d="M224.0 344.5h6M227.0 341.5v6" stroke="#f0f0f0" stroke-width="1" fill="none"/>
<text x="146" y="352.5" font-family="Liberation Sans,sans-serif" font-size="10.5" fill="#c0c0c0" text-anchor="start" transform="rotate(-90 146 352.5)" textLength="14" lengthAdjust="spacingAndGlyphs" font-weight="700">P3</text>
<text x="179.5" y="352.5" font-family="Liberation Sans,sans-serif" font-size="10.5" fill="#c0c0c0" text-anchor="start" transform="rotate(-90 179.5 352.5)" textLength="14" lengthAdjust="spacingAndGlyphs" font-weight="700">P2</text>
<text x="213.5" y="352.5" font-family="Liberation Sans,sans-serif" font-size="10.5" fill="#c0c0c0" text-anchor="start" transform="rotate(-90 213.5 352.5)" textLength="14" lengthAdjust="spacingAndGlyphs" font-weight="700">P1</text>
<line x1="157.5" y1="333.5" x2="226" y2="333.5" stroke="#a8a888" stroke-width="1"/>
<line x1="151.7" y1="353.5" x2="219.5" y2="353.5" stroke="#a8a888" stroke-width="1"/>
<line x1="699" y1="252" x2="673" y2="410" stroke="#a8a888" stroke-width="1"/>
<line x1="734.5" y1="252" x2="775" y2="367.5" stroke="#a8a888" stroke-width="1"/>
<line x1="679" y1="424.5" x2="771.5" y2="386.5" stroke="#a8a888" stroke-width="1"/>
<line x1="679" y1="428" x2="730" y2="560" stroke="#a8a888" stroke-width="1"/>
<line x1="773" y1="388.5" x2="738" y2="560" stroke="#a8a888" stroke-width="1"/>
<line x1="94" y1="428.3" x2="771.5" y2="384" stroke="#a8a888" stroke-width="1"/>
<line x1="58" y1="437.2" x2="208" y2="433" stroke="#a8a888" stroke-width="1"/>
<line x1="227" y1="432.5" x2="668" y2="426" stroke="#a8a888" stroke-width="1"/>
<line x1="58" y1="571.3" x2="668" y2="428" stroke="#a8a888" stroke-width="1"/>
<line x1="232" y1="393.5" x2="718" y2="572.5" stroke="#a8a888" stroke-width="1"/>
<line x1="63" y1="386" x2="730" y2="560.5" stroke="#a8a888" stroke-width="1"/>
<line x1="58" y1="400.3" x2="717" y2="593" stroke="#a8a888" stroke-width="1"/>
<line x1="58" y1="539.5" x2="731" y2="563.3" stroke="#a8a888" stroke-width="1"/>
<line x1="58" y1="574.4" x2="731" y2="562.6" stroke="#a8a888" stroke-width="1"/>
<line x1="58" y1="544.3" x2="717" y2="610.2" stroke="#a8a888" stroke-width="1"/>
<line x1="58" y1="559.4" x2="717" y2="603.9" stroke="#a8a888" stroke-width="1"/>
<line x1="58" y1="561.9" x2="731" y2="621" stroke="#a8a888" stroke-width="1"/>
<line x1="235" y1="607.5" x2="731" y2="621.5" stroke="#a8a888" stroke-width="1"/>
<line x1="154" y1="671.7" x2="776" y2="583.7" stroke="#a8a888" stroke-width="1"/>
<line x1="257" y1="683" x2="776" y2="595.4" stroke="#a8a888" stroke-width="1"/>
<line x1="297" y1="684" x2="731" y2="623" stroke="#a8a888" stroke-width="1"/>
<line x1="154" y1="607.5" x2="235" y2="607.5" stroke="#a8a888" stroke-width="1"/>
<line x1="58" y1="480.4" x2="236" y2="623" stroke="#a8a888" stroke-width="1"/>
<line x1="58" y1="488.7" x2="236" y2="615.5" stroke="#a8a888" stroke-width="1"/>
<line x1="101" y1="489" x2="151.5" y2="684" stroke="#a8a888" stroke-width="1"/>
<line x1="58" y1="371.6" x2="151.7" y2="353.5" stroke="#a8a888" stroke-width="1"/>
<line x1="157.5" y1="333" x2="106" y2="380.7" stroke="#a8a888" stroke-width="1"/>
<line x1="151.7" y1="354" x2="70.5" y2="437" stroke="#a8a888" stroke-width="1"/>
<line x1="88" y1="377.4" x2="58" y2="412" stroke="#a8a888" stroke-width="1"/>
<line x1="106" y1="380.7" x2="88.6" y2="437" stroke="#a8a888" stroke-width="1"/>
<line x1="104" y1="483" x2="198.5" y2="353.6" stroke="#a8a888" stroke-width="1"/>
<line x1="58" y1="513.5" x2="157.4" y2="438" stroke="#a8a888" stroke-width="1"/>
<line x1="166.7" y1="483" x2="140.3" y2="439.5" stroke="#a8a888" stroke-width="1"/>
<line x1="166.7" y1="483" x2="208" y2="433" stroke="#a8a888" stroke-width="1"/>
<line x1="70.5" y1="437.5" x2="104" y2="483" stroke="#a8a888" stroke-width="1"/>
<line x1="232.2" y1="354" x2="231.8" y2="393.5" stroke="#a8a888" stroke-width="1"/>
<line x1="231.8" y1="393" x2="213" y2="424" stroke="#a8a888" stroke-width="1"/>
<line x1="230.5" y1="393" x2="221" y2="483.5" stroke="#a8a888" stroke-width="1"/>
<line x1="232" y1="393" x2="226" y2="432" stroke="#a8a888" stroke-width="1"/>
<line x1="226.5" y1="433" x2="231.4" y2="483.5" stroke="#a8a888" stroke-width="1"/>
<line x1="741.5" y1="568" x2="738" y2="616" stroke="#a8a888" stroke-width="1"/>
<line x1="758" y1="568" x2="753.3" y2="616" stroke="#a8a888" stroke-width="1"/>
<line x1="58" y1="437.2" x2="208" y2="433" stroke="#b8b870" stroke-width="1"/>
<line x1="63" y1="386" x2="197" y2="381.5" stroke="#b4a860" stroke-width="1.1"/>
<line x1="63" y1="386.5" x2="197" y2="389" stroke="#b4a860" stroke-width="1.1"/>
<line x1="68" y1="385" x2="197" y2="385" stroke="#b4a860" stroke-width="1"/>
<line x1="143" y1="379" x2="208" y2="380.5" stroke="#a8a888" stroke-width="1"/>
<line x1="123" y1="392.5" x2="197" y2="392" stroke="#a8a888" stroke-width="1"/>
<line x1="690" y1="563.5" x2="731" y2="563.5" stroke="#b4a860" stroke-width="1"/>
<line x1="690" y1="607" x2="717" y2="606.5" stroke="#b4a860" stroke-width="1"/>
<line x1="690" y1="620.5" x2="731" y2="621.5" stroke="#b4a860" stroke-width="1"/>
<line x1="100" y1="573.5" x2="135" y2="573" stroke="#b4a860" stroke-width="1"/>
<line x1="234" y1="572" x2="262" y2="571.5" stroke="#b4a860" stroke-width="1"/>
<line x1="300" y1="570" x2="330" y2="570" stroke="#b4a860" stroke-width="1"/>
</svg>
</div>
<div id="vscroll"><svg class="abs" style="left:4px;top:5px" width="9" height="7"><path d="M1 5.500l3.500-3.500 3.500 3.500" fill="none" stroke="#444" stroke-width="1.800"/></svg>
<div class="abs" style="left:1px;top:35px;width:15px;height:477px;background:#a6a6a6"></div>
<svg class="abs" style="left:4px;top:552px" width="9" height="7"><path d="M1 1.500l3.500 3.500 3.500-3.500" fill="none" stroke="#444" stroke-width="1.800"/></svg></div>
<div id="hscroll"><svg class="abs" style="left:4px;top:4px" width="7" height="9"><path d="M5.500 1l-3.500 3.500 3.500 3.500" fill="none" stroke="#444" stroke-width="1.800"/></svg>
<div class="abs" style="left:158px;top:1px;width:1114px;height:16px;background:#cdcdcd"></div>
<svg class="abs" style="left:1279px;top:4px" width="7" height="9"><path d="M1.500 1l3.500 3.500-3.500 3.500" fill="none" stroke="#444" stroke-width="1.800"/></svg></div>
<div id="status"><span class="abs" id="stxt" style="left:9px;top:8px;font-size:12px;letter-spacing:.06px;white-space:nowrap"><span style="font-size:12px;letter-spacing:.5px">♦</span> Left-click to select object to move</span>
<div class="sep" style="left:1324px;top:4px;height:20px;background:#d8d8d8"></div><div class="sep" style="left:1346px;top:4px;height:20px;background:#d8d8d8"></div>
<svg class="abs" style="left:1328px;top:6px" width="14" height="17" viewBox="0 0 14 17"><path d="M8.500 0.500L1 9.500h5L4.500 16.500 13 7H8z" fill="#6ab42c"/></svg>
<svg class="abs" style="left:1349px;top:6px" width="17" height="17" viewBox="0 0 17 17"><circle cx="8.500" cy="8.500" r="8" fill="#3c3c3c"/><rect x="7.300" y="3" width="2.400" height="7.500" fill="#f0f0f0"/><rect x="7.300" y="11.800" width="2.400" height="2.400" fill="#f0f0f0"/></svg>
</div>
<div id="task">
<svg class="abs" style="left:16px;top:12px" width="16" height="16" viewBox="0 0 16 16"><path d="M0 2.300l6.500-.9v6.100H0zM7.300 1.300L16 0v7.500H7.300zM0 8.300h6.500v6.200L0 13.600zM7.300 8.300H16V16l-8.700-1.200z" fill="#fff"/></svg>
<div class="abs" style="left:48px;top:0;width:344px;height:40px;background:#3b3b3b"></div>
<svg class="abs" style="left:57px;top:10px" width="22" height="22"><circle cx="11" cy="11" r="8.500" fill="none" stroke="#f4f4f4" stroke-width="2.600"/></svg>
<span class="abs" id="ask" style="left:84px;top:11px;font-size:15px;color:#b9b9b9;white-space:nowrap">Ask me anything</span>
<svg class="abs" style="left:365px;top:11px" width="12" height="18" viewBox="0 0 12 18"><rect x="3.500" y="1" width="5" height="10" rx="2.500" fill="none" stroke="#a8a8a8" stroke-width="1.100"/><path d="M1.500 8.500v1a4.500 4.500 0 0 0 9 0v-1M6 14v2.500M3.500 16.800h5" fill="none" stroke="#a8a8a8" stroke-width="1.100"/></svg>
<svg class="abs" style="left:405px;top:12px" width="22" height="16" viewBox="0 0 22 16"><rect x="5" y="1" width="12" height="13" fill="none" stroke="#fff" stroke-width="1.400"/><path d="M3 3H1v9h2M19 3h2v9h-2" fill="none" stroke="#fff" stroke-width="1.400"/></svg>
<!-- edge -->
<svg class="abs" style="left:456px;top:9px" width="22" height="22" viewBox="0 0 22 22"><path d="M1 10C2 3.500 7 .8 11.500.8c6 0 9.500 4.500 9.500 10v2H7.500c.3 3 3 4.300 6 4.300 2.500 0 4.500-.7 6-1.600v4.300c-2 1.100-4.300 1.600-7 1.600C6.500 21.400 2.700 17.500 2.700 13 2.700 9.500 4.500 7 7.500 5.500 5 6.500 2.500 8 1 10zM7.600 9h7.600c0-2.300-1.400-3.800-3.700-3.800S7.900 6.800 7.600 9z" fill="#1e78d2"/></svg>
<!-- explorer -->
<svg class="abs" style="left:504px;top:10px" width="24" height="20" viewBox="0 0 24 20"><path d="M1 2.500h7l2 2h13v13H1z" fill="#e8b94a"/><path d="M1 6h22v11.500H1z" fill="#f7d978"/><path d="M5 12h14v5.500H5z" fill="#3f9ad6"/><path d="M9 14.500h6v3H9z" fill="#f7d978"/></svg>
<!-- store -->
<svg class="abs" style="left:553px;top:8px" width="22" height="24" viewBox="0 0 22 24"><path d="M7 6.500V5a4 4 0 0 1 8 0v1.500" fill="none" stroke="#fff" stroke-width="1.300"/><path d="M0.500 6.500h21l-1 16.500H1.500z" fill="#fff"/><path d="M6 11l4-.6v4H6zM10.800 10.300l5.200-.8v4.900h-5.200zM6 15.200h4v4l-4-.6zM10.800 15.200H16v5l-5.200-.8z" fill="#0b0e13"/></svg>
<!-- calc thing -->
<svg class="abs" style="left:602px;top:9px" width="22" height="24" viewBox="0 0 22 24"><path d="M2 2.500L19 1l2 18-17 3.500z" fill="#e2dab8" stroke="#9a9478" stroke-width="1"/><path d="M2 2.500L19 1l.5 3.500L2.500 6z" fill="#c8c098"/><circle cx="15" cy="7" r="2" fill="#2a4a8a"/><path d="M6 10l8 7M13 10l-7 8" stroke="#6a6650" stroke-width="1.300"/><circle cx="8" cy="16" r="2" fill="none" stroke="#55513c" stroke-width="1.200"/></svg>
<!-- colorful circle -->
<svg class="abs" style="left:651px;top:9px" width="23" height="23" viewBox="0 0 23 23"><circle cx="11.500" cy="11.500" r="10.500" fill="#e8e8e8"/><path d="M11.500 1A10.500 10.500 0 0 1 22 11.500H11.500z" fill="#e84a2a"/><path d="M22 11.500A10.500 10.500 0 0 1 11.500 22V11.500z" fill="#4aa83a"/><path d="M11.500 22A10.500 10.500 0 0 1 1 11.500h10.500z" fill="#f0c020"/><path d="M1 11.500A10.500 10.500 0 0 1 11.500 1v10.500z" fill="#f08a2a"/><circle cx="12.500" cy="12" r="5.500" fill="#3a8ad0"/><path d="M5 14l6-9 1 6z" fill="#fff"/></svg>
<!-- firefox -->
<svg class="abs" style="left:700px;top:9px" width="23" height="23" viewBox="0 0 23 23"><circle cx="11.500" cy="11.500" r="11" fill="#e86a1a"/><circle cx="12.500" cy="9.500" r="6.500" fill="#2a5ab8"/><path d="M1 9C3 3 8 1.500 11 3c-3 1-4 3.500-2.500 5.500 2 1 4 .5 5 2-1.500 2.500-4.500 3-6 2 1.500 3.500 6.500 4 10 1.500 1-1 2-2.500 2.500-4.500.8 5-2 11-8.500 11.500S.5 16.500 1 9z" fill="#f0a020"/><path d="M1 9C3 3 8 1.500 11 3c-3 1-4 3.500-2.500 5.500-3.500.5-4 3-1 5C3 13 1.500 11 1 9z" fill="#e8501a"/></svg>
<!-- sticky -->
<svg class="abs" style="left:751px;top:10px" width="20" height="20" viewBox="0 0 20 20"><path d="M0.500 0.500h19v12l-6.500 7H.5z" fill="#f3e99a"/><path d="M19.500 12.500h-6.500v7z" fill="#6a663c"/></svg>
<div class="abs" style="left:742px;top:38px;width:39px;height:2px;background:#9cc8ee"></div>
<div class="abs" style="left:786px;top:0;width:47px;height:40px;background:#32363a"></div>
<div class="abs" style="left:787px;top:38px;width:46px;height:2px;background:#9cc8ee"></div>
<svg class="abs" style="left:800px;top:8px" width="20" height="24" viewBox="0 0 20 24"><path d="M2 1.500C7 2.500 13 2 18 .5l-.5 4.500C13 6 9.500 6 7.500 5.800l.3 4c2.500.4 5.500 0 8-.8l-.3 4.300c-2.500.8-5.300.9-7.400.7l.4 4.200c3 .5 6.500 0 9.500-1.200l-.5 4.500C12.500 23.300 6.500 23.500 2.500 22.500z" fill="#e08a28"/><path d="M2 1.500C7 2.500 13 2 18 .5l-.3 2C12.500 4 6.500 4 2.200 3.300z" fill="#f8c060"/></svg>
<!-- tray -->
<svg class="abs" style="left:1206px;top:14px" width="14" height="9"><path d="M1.500 7.500L7 2l5.500 5.500" fill="none" stroke="#fff" stroke-width="1.300"/></svg>
<svg class="abs" style="left:1230px;top:10px" width="18" height="18" viewBox="0 0 18 18"><g fill="none" stroke="#e8e8e8" stroke-width="1.200"><path d="M2.500 16C2.500 9 7.500 3 14.500 2"/><path d="M6 16c0-5.500 3.500-9.500 9-10.500"/><path d="M9.500 16c0-3.500 2.300-6 5.800-6.800"/></g><circle cx="14" cy="14.500" r="1.800" fill="#fff"/></svg>
<span class="abs" id="clk" style="left:1259px;top:3px;width:46px;text-align:center;font-size:12px;color:#fff;white-space:nowrap">2:51 PM</span>
<span class="abs" id="dat" style="left:1257px;top:22px;width:50px;text-align:center;font-size:12px;color:#fff;white-space:nowrap">3/6/2017</span>
<svg class="abs" style="left:1324px;top:11px" width="26" height="24" viewBox="0 0 26 24"><path d="M1 1h16v11.500H9.500L6 16v-3.500H1z" fill="#fff"/><path d="M3.500 4h11M3.500 6.500h11M3.500 9h11" stroke="#0b0e13" stroke-width="1"/><circle cx="16.500" cy="15.500" r="7" fill="#2c2c2c" stroke="#555" stroke-width="1"/><text x="16.500" y="19.500" font-family="Liberation Sans,sans-serif" font-weight="700" font-size="11" fill="#fff" text-anchor="middle">2</text></svg>
<div class="abs" style="left:1361px;top:0;width:1px;height:40px;background:#4a4e54"></div>
</div>
</body></html>
